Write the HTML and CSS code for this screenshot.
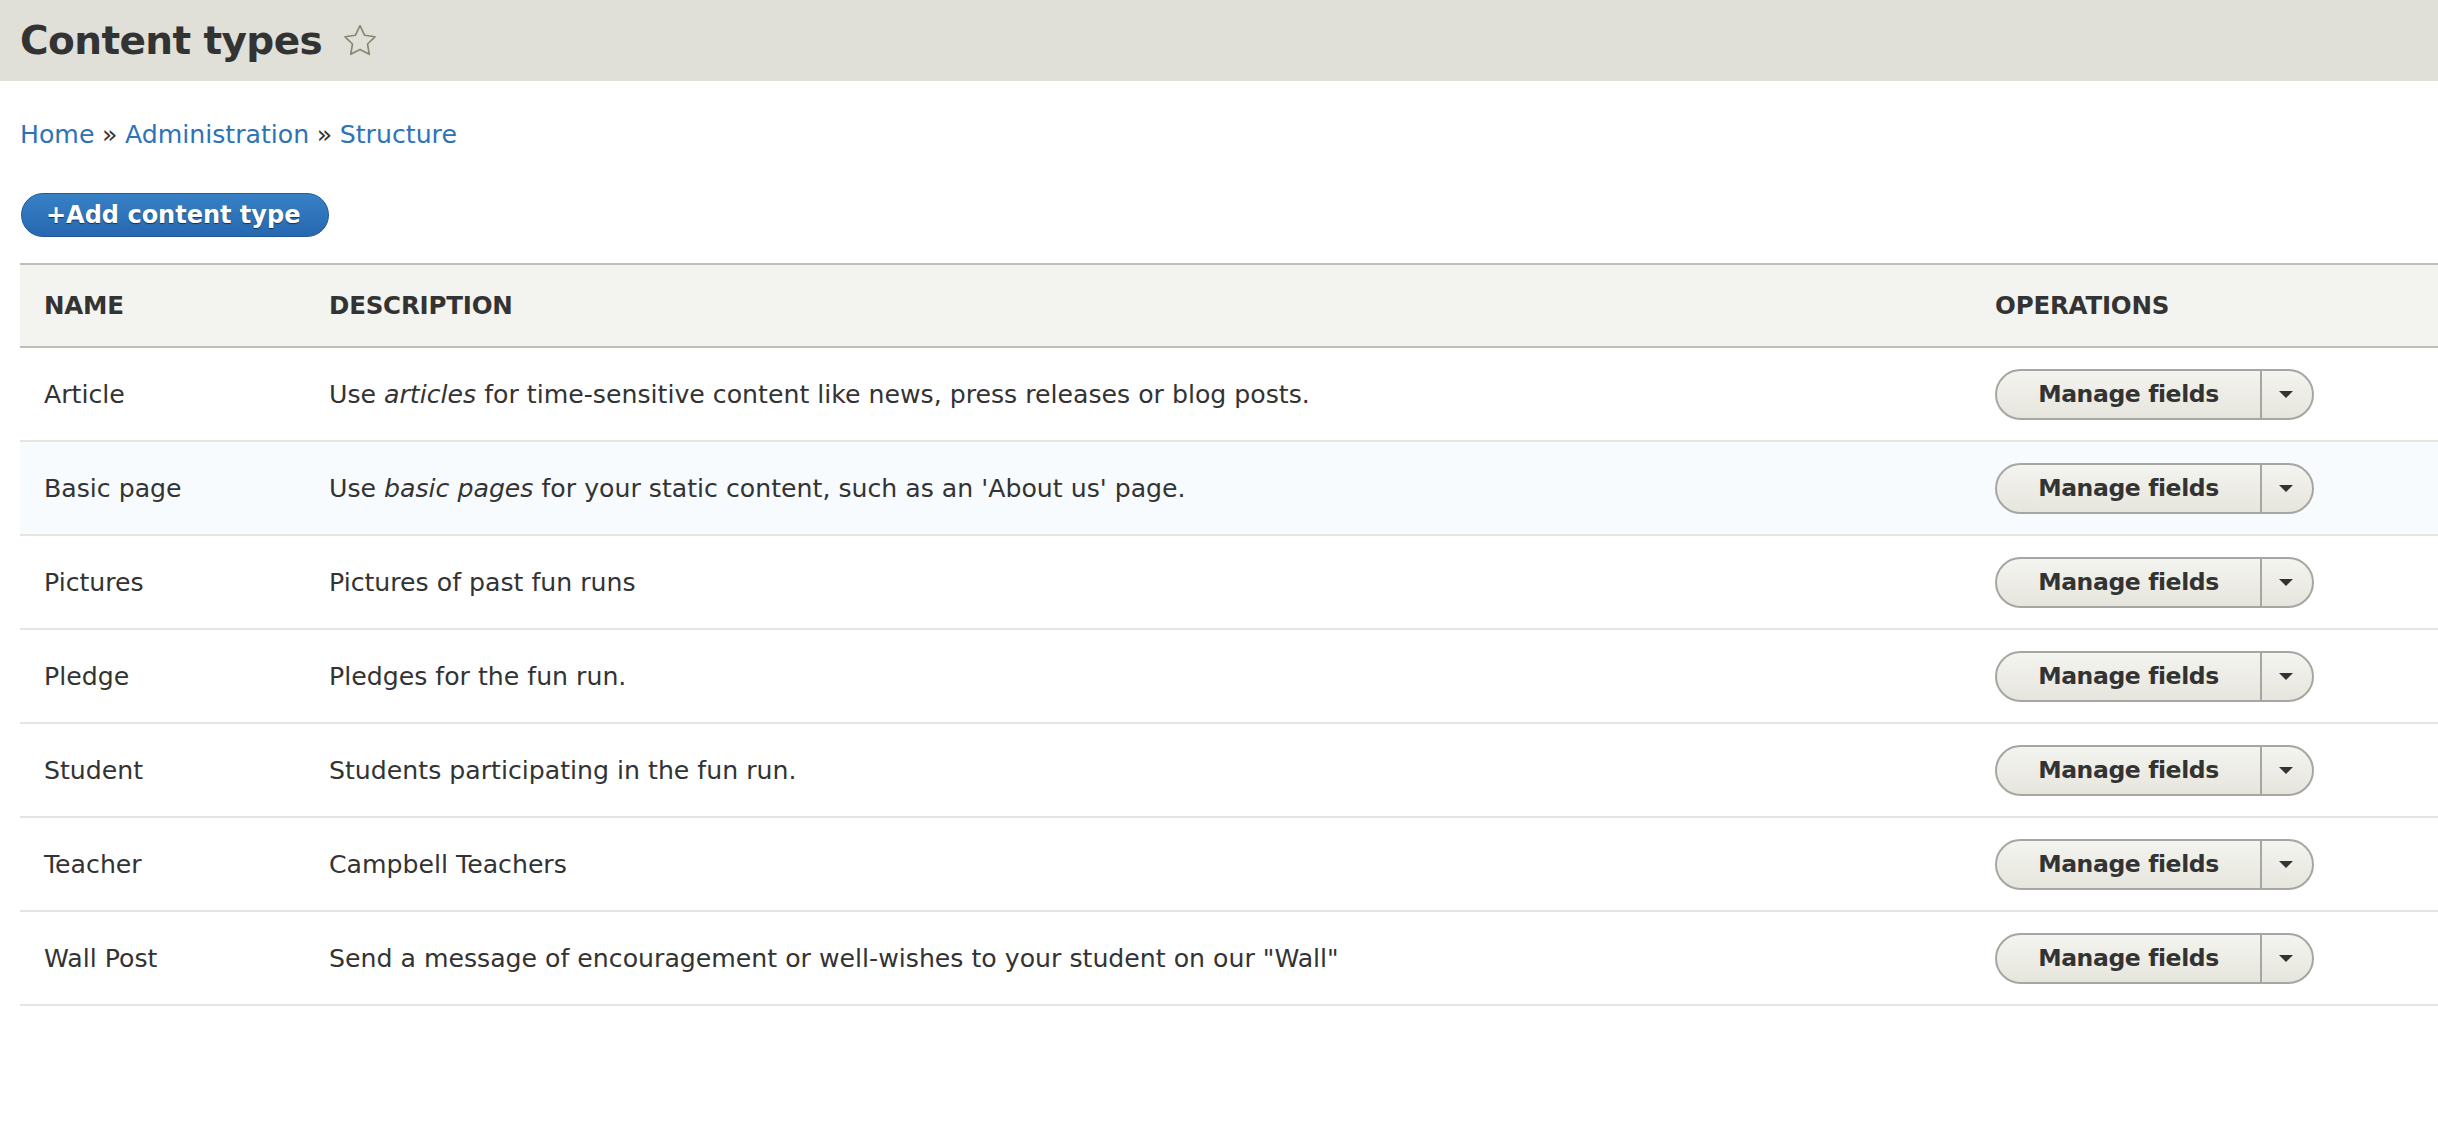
FILE: index.html
```html
<!DOCTYPE html>
<html lang="en">
<head>
<meta charset="utf-8">
<title>Content types</title>
<link rel="stylesheet" href="styles.css">
</head>
<body>
<header class="page-header">
  <h1 class="page-title">Content types</h1>
  <svg class="shortcut-star" viewBox="0 0 24 24" width="36" height="36" aria-hidden="true">
    <polygon points="12,1.8 15.1,8.2 22,9.2 17,14 18.2,20.9 12,17.6 5.8,20.9 7,14 2,9.2 8.9,8.2" fill="none" stroke="#8a8672" stroke-width="1.1" stroke-linejoin="round"/>
  </svg>
</header>
<main class="content">
  <nav class="breadcrumb">
    <a href="#">Home</a><span class="sep">»</span><a href="#">Administration</a><span class="sep">»</span><a href="#">Structure</a>
  </nav>
  <div class="actions">
    <a class="button-primary" href="#">+Add content type</a>
  </div>
  <table class="types-table">
    <colgroup>
      <col class="col-name">
      <col class="col-desc">
      <col class="col-ops">
    </colgroup>
    <thead>
      <tr><th>Name</th><th>Description</th><th>Operations</th></tr>
    </thead>
    <tbody>
      <tr>
        <td>Article</td>
        <td>Use <em>articles</em> for time-sensitive content like news, press releases or blog posts.</td>
        <td><div class="dropbutton"><span class="drop-main">Manage fields</span><span class="drop-toggle"><i class="arrow"></i></span></div></td>
      </tr>
      <tr class="is-hover">
        <td>Basic page</td>
        <td>Use <em>basic pages</em> for your static content, such as an 'About us' page.</td>
        <td><div class="dropbutton"><span class="drop-main">Manage fields</span><span class="drop-toggle"><i class="arrow"></i></span></div></td>
      </tr>
      <tr>
        <td>Pictures</td>
        <td>Pictures of past fun runs</td>
        <td><div class="dropbutton"><span class="drop-main">Manage fields</span><span class="drop-toggle"><i class="arrow"></i></span></div></td>
      </tr>
      <tr>
        <td>Pledge</td>
        <td>Pledges for the fun run.</td>
        <td><div class="dropbutton"><span class="drop-main">Manage fields</span><span class="drop-toggle"><i class="arrow"></i></span></div></td>
      </tr>
      <tr>
        <td>Student</td>
        <td>Students participating in the fun run.</td>
        <td><div class="dropbutton"><span class="drop-main">Manage fields</span><span class="drop-toggle"><i class="arrow"></i></span></div></td>
      </tr>
      <tr>
        <td>Teacher</td>
        <td>Campbell Teachers</td>
        <td><div class="dropbutton"><span class="drop-main">Manage fields</span><span class="drop-toggle"><i class="arrow"></i></span></div></td>
      </tr>
      <tr>
        <td>Wall Post</td>
        <td>Send a message of encouragement or well-wishes to your student on our "Wall"</td>
        <td><div class="dropbutton"><span class="drop-main">Manage fields</span><span class="drop-toggle"><i class="arrow"></i></span></div></td>
      </tr>
    </tbody>
  </table>
</main>
</body>
</html>
```
FILE: styles.css
```css
html, body {
  margin: 0;
  padding: 0;
  background: #ffffff;
}
body {
  font-family: "DejaVu Sans", "Liberation Sans", sans-serif;
  font-size: 25.2px;
  color: #333333;
  overflow-x: hidden;
}
.page-header {
  display: flex;
  align-items: center;
  height: 81px;
  padding-left: 20px;
  background: #e0e0d8;
}
.page-title {
  margin: 0;
  font-size: 39px;
  line-height: 83px;
  font-weight: bold;
  letter-spacing: -0.6px;
  color: #333333;
}
.shortcut-star {
  display: block;
  margin-left: 20px;
}
.content {
  padding-left: 20px;
}
.breadcrumb {
  margin-top: 35px;
  line-height: 37px;
  height: 37px;
}
.breadcrumb a {
  color: #2e73b8;
  text-decoration: none;
}
.breadcrumb .sep {
  color: #333333;
  margin: 0 0.3em;
}
.actions {
  margin-top: 40px;
  display: flex;
}
.button-primary {
  display: inline-flex;
  align-items: center;
  box-sizing: border-box;
  height: 44px;
  padding: 0 28px 0 24px;
  border: 1px solid #1f5a92;
  border-radius: 22px;
  background: linear-gradient(#3781c6, #2768b0);
  color: #ffffff;
  font-size: 24px;
  font-weight: bold;
  text-decoration: none;
  text-shadow: 0 1px 1px rgba(0, 0, 0, 0.55);
  margin-left: 1px;
}
.types-table {
  margin-top: 26px;
  width: 2418px;
  table-layout: fixed;
  border-collapse: separate;
  border-spacing: 0;
}
.col-name { width: 285px; }
.col-desc { width: 1666px; }
.col-ops { width: 467px; }
.types-table th {
  box-sizing: border-box;
  height: 85px;
  padding: 0 24px;
  background: #f3f3ef;
  border-top: 2px solid #bfbeb6;
  border-bottom: 2px solid #bfbeb6;
  text-align: left;
  text-transform: uppercase;
  font-weight: bold;
  font-size: 24.5px;
  letter-spacing: -0.2px;
  vertical-align: middle;
  color: #333333;
}
.types-table td {
  box-sizing: border-box;
  height: 94px;
  padding: 0 24px;
  border-bottom: 2px solid #e6e4df;
  vertical-align: middle;
  white-space: nowrap;
}
.types-table tr.is-hover td {
  background: #f7fbfe;
}
.dropbutton {
  display: inline-flex;
  box-sizing: border-box;
  height: 51px;
  border: 2px solid #a6a6a2;
  border-radius: 26px;
  background: linear-gradient(#f4f4f0, #e6e5dd);
  overflow: hidden;
}
.drop-main {
  display: flex;
  align-items: center;
  justify-content: center;
  width: 263px;
  font-weight: bold;
  font-size: 23.5px;
  letter-spacing: -0.4px;
  color: #333333;
  border-right: 2px solid #a6a6a2;
}
.drop-toggle {
  display: flex;
  align-items: center;
  justify-content: center;
  width: 48px;
  padding-right: 2px;
}
.arrow {
  display: block;
  width: 0;
  height: 0;
  border-left: 7.5px solid transparent;
  border-right: 7.5px solid transparent;
  border-top: 7px solid #333333;
}
```
